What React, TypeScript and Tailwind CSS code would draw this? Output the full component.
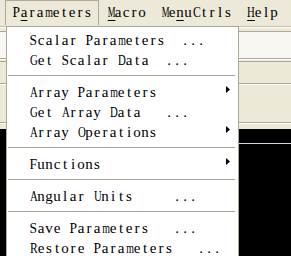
import React from 'react'

type Item = { label: string; dots?: number; sub?: boolean } | 'sep'

const items: Item[] = [
  { label: 'Scalar Parameters', dots: 2 },
  { label: 'Get Scalar Data', dots: 2 },
  'sep',
  { label: 'Array Parameters', sub: true },
  { label: 'Get Array Data', dots: 3 },
  { label: 'Array Operations', sub: true },
  'sep',
  { label: 'Functions', sub: true },
  'sep',
  { label: 'Angular Units', dots: 5 },
  'sep',
  { label: 'Save Parameters', dots: 3 },
  { label: 'Restore Parameters', dots: 3 },
]

// squeeze wide glyphs into the 8px cell
const squeeze: Record<string, string> = {
  A: 'scale-x-[0.72]',
  D: 'scale-x-[0.72]',
  G: 'scale-x-[0.72]',
  H: 'scale-x-[0.72]',
  O: 'scale-x-[0.72]',
  U: 'scale-x-[0.72]',
  C: 'scale-x-[0.78]',
  R: 'scale-x-[0.78]',
  F: 'scale-x-[0.9]',
  P: 'scale-x-[0.9]',
  S: 'scale-x-[0.9]',
  m: 'scale-x-[0.66]',
  M: 'scale-x-[0.58]',
}

// half-width cells, 8px each, like the old system font
function Mono({ text, under = -1 }: { text: string; under?: number }) {
  return (
    <>
      {text.split('').map((c, i) => {
        let cls = 'inline-block w-[8px] text-center whitespace-pre'
        if (squeeze[c]) cls += ' ' + squeeze[c]
        if (i === under) cls += ' underline underline-offset-[3px]'
        return (
          <span key={i} className={cls}>
            {c}
          </span>
        )
      })}
    </>
  )
}

function MenuBarItem({ pressed, children }: { pressed?: boolean; children: React.ReactNode }) {
  return (
    <div
      className={
        pressed
          ? 'h-[25px] px-[6px] border border-b-0 border-[#aca899] leading-[22px]'
          : 'h-[25px] px-[6px] border border-transparent leading-[22px]'
      }
    >
      {children}
    </div>
  )
}

function Line({ color }: { color: string }) {
  return <div className="h-px" style={{ background: color }} />
}

export default function App() {
  return (
    <div className="relative w-[291px] h-[256px] overflow-hidden bg-[#ece9d8] text-black font-[family-name:'Liberation_Serif',serif] text-[15px]">
      {/* menubar */}
      <div className="flex h-[26px] pl-[5px]">
        <MenuBarItem pressed>
          <Mono text="Parameters" under={1} />
        </MenuBarItem>
        <MenuBarItem>
          <Mono text="Macro" under={0} />
        </MenuBarItem>
        <MenuBarItem>
          <Mono text="MenuCtrls" under={2} />
        </MenuBarItem>
        <MenuBarItem>
          <Mono text="Help" under={0} />
        </MenuBarItem>
      </div>

      {/* toolbars */}
      <div className="flex flex-col">
        <Line color="#c5c2b2" />
        <Line color="#ffffff" />
        <div className="h-[3px]" />
        <Line color="#aca899" />
        <div className="h-[26px] bg-[#f8f7f2]" />
        <Line color="#aca899" />
        <Line color="#ffffff" />
        <div className="h-px" />
        <Line color="#aca899" />
        <div className="h-[21px]" />
        <Line color="#aca899" />
        <Line color="#ffffff" />
        <div className="h-[37px]" />
        <Line color="#aca899" />
        <Line color="#ffffff" />
        <div className="h-[5px]" />
      </div>

      {/* canvas */}
      <div className="h-[130px] bg-black pt-[14px]">
        <div className="ml-[8px] h-px bg-[#d8d8d8]" />
      </div>

      {/* dropdown */}
      <div className="absolute left-[6px] top-[26px] w-[233px] h-[240px] bg-white border border-[#aca899] pt-[4px]">
        {items.map((it, i) =>
          it === 'sep' ? (
            <div key={i} className="h-[12px] pt-[4px] pl-[1px] pr-[3px]">
              <div className="h-px bg-[#aca899]" />
            </div>
          ) : (
            <div key={i} className="relative h-[20px] leading-[18px] pl-[22px] whitespace-pre">
              <Mono text={it.label + (it.dots ? ' '.repeat(it.dots) + '...' : '')} />
              {it.sub && (
                <svg className="absolute left-[219px] top-[3px]" width="4" height="7" viewBox="0 0 4 7">
                  <path d="M0 0 L4 3.5 L0 7 Z" fill="#000" />
                </svg>
              )}
            </div>
          )
        )}
      </div>
    </div>
  )
}
